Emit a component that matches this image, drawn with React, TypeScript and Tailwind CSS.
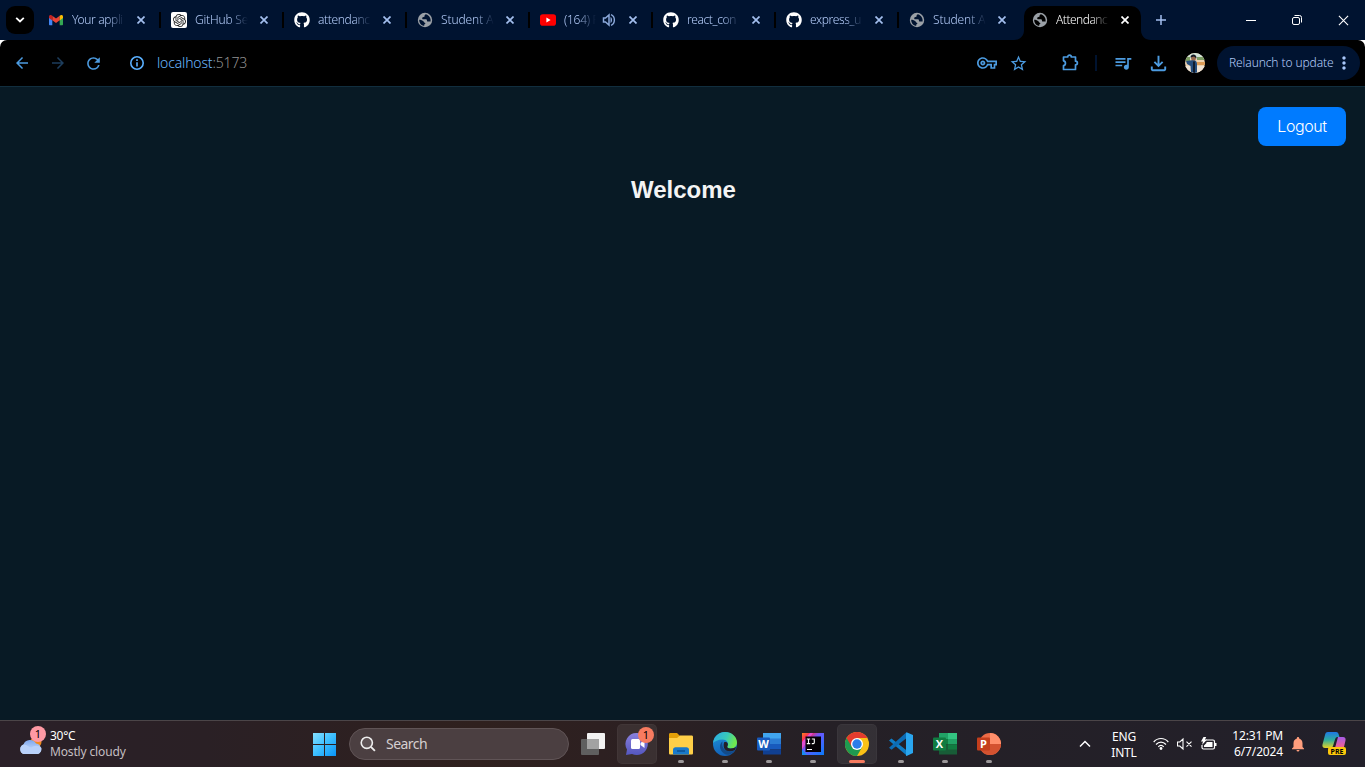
import React, { ReactNode } from "react";
import { FaGithub } from "react-icons/fa";
import { SiOpenai } from "react-icons/si";
import {
  MdOutlineVpnKey,
  MdStarBorder,
  MdQueueMusic,
  MdOutlineFileDownload,
  MdMoreVert,
  MdRefresh,
  MdArrowBack,
  MdArrowForward,
  MdNotifications,
} from "react-icons/md";

function Gmail() {
  return (
    <svg width="16" height="16" viewBox="0 0 16 16">
      <path d="M1 4v8.2c0 .6.4 1 1 1h2.300V7.200L1 4.700Z" fill="#4285f4" />
      <path d="M15 4v8.200c0 .6-.4 1-1 1h-2.300V7.200L15 4.700Z" fill="#34a853" />
      <path d="M4.300 3.800 8 6.600l3.700-2.800v4.400L8 11 4.300 8.200Z" fill="#ea4335" />
      <path d="M11.700 3.800c1.300-1.200 3.300-1 3.300.9v1.200l-3.300 2.500Z" fill="#fbbc04" />
      <path d="M4.300 3.800C3 2.600 1 2.800 1 4.700v1.200l3.300 2.500Z" fill="#c5221f" />
    </svg>
  );
}

function OpenAi() {
  return (
    <span className="flex h-4 w-4 items-center justify-center rounded-[2px] bg-white text-[#222]">
      <SiOpenai size={13} />
    </span>
  );
}

function Globe({ land = "#001330" }: { land?: string }) {
  return (
    <svg width="16" height="16" viewBox="0 0 16 16">
      <circle cx="8" cy="8" r="7.200" fill="#9aa0a6" />
      <path
        d="M9 2.300c-1 .3-1.600 1-1.400 1.800.2.800-.8 1-1.700 1.200-.9.200-.9 1.500-.2 1.900h3c1 0 1.300.7 1.300 1.500s.8.900 1.700.8c.8-.1 1.300.2 1.900.1.500-2.900-1.200-6.100-4.600-7.300Z"
        fill={land}
      />
      <path
        d="M2.200 7.700c1.200.1 2.600.3 3.900 1.200.9.6.7 1.600 1.700 1.800.8.200.7 1.100.1 1.400-.7.300-.7 1-.6 1.700-3-.3-5.200-2.900-5.100-6.100Z"
        fill={land}
      />
    </svg>
  );
}

function YouTube() {
  return (
    <svg width="16" height="16" viewBox="0 0 16 16">
      <rect x="0" y="2.300" width="16" height="11.400" rx="2.800" fill="#f00" />
      <path d="M6.400 5.600 10.600 8l-4.200 2.400Z" fill="#fff" />
    </svg>
  );
}

function Close({ className }: { className: string }) {
  return (
    <svg width="8" height="8" viewBox="0 0 8 8" className={className}>
      <path d="M.5.5l7 7M7.500.5l-7 7" stroke="currentColor" strokeWidth="1.700" fill="none" />
    </svg>
  );
}

function Speaker() {
  return (
    <svg width="14" height="14" viewBox="0 0 14 14" className="shrink-0 text-[#8ba9da]">
      <path d="M1.500 5h2L7 2v10L3.500 9h-2Z" fill="none" stroke="currentColor" strokeWidth="1.500" />
      <path d="M8.500 4v6c2-.5 2-5.500 0-6Z" fill="currentColor" />
      <path d="M9 1.700c4.500 1.800 4.500 8.800 0 10.600" fill="none" stroke="currentColor" strokeWidth="1.400" />
    </svg>
  );
}

type TabInfo = { icon: ReactNode; title: string; audio?: boolean; last?: boolean; tracking?: string };

const tabs: TabInfo[] = [
  { icon: <Gmail />, title: "Your appli" },
  { icon: <OpenAi />, title: "GitHub Se", tracking: "tracking-[-0.2px]" },
  { icon: <FaGithub size={16} className="text-white" />, title: "attendanc" },
  { icon: <Globe />, title: "Student A", tracking: "tracking-[-0.1px]" },
  { icon: <YouTube />, title: "(164) F", audio: true, tracking: "tracking-[-0.3px]" },
  { icon: <FaGithub size={16} className="text-white" />, title: "react_con" },
  { icon: <FaGithub size={16} className="text-white" />, title: "express_u" },
  { icon: <Globe />, title: "Student A", last: true, tracking: "tracking-[-0.1px]" },
];

function Tab({ tab }: { tab: TabInfo }) {
  return (
    <div className="flex h-10 w-[123px] shrink-0 items-center pl-[10px]">
      <span className="flex w-4 shrink-0">{tab.icon}</span>
      <span
        className={
          (tab.audio ? "w-[32px]" : "w-[53px]") +
          " ml-2 whitespace-nowrap text-[12px] font-light leading-4 text-[#b4cdfa] [mask-image:linear-gradient(to_left,transparent,black_18px)] " +
          (tab.tracking ?? "tracking-[-0.35px]")
        }
      >
        {tab.title}
      </span>
      {tab.audio && (
        <span className="ml-[6px] mr-[-1px] flex w-4">
          <Speaker />
        </span>
      )}
      <Close className="ml-3 shrink-0 text-[#a3bfee]" />
      {!tab.last && <span className="ml-auto h-4 w-[2px] bg-black" />}
    </div>
  );
}

function TabStrip() {
  return (
    <div className="flex h-10 shrink-0 items-center bg-[#001330] pl-[6px]">
      <div className="flex h-7 w-7 shrink-0 items-center justify-center rounded-[9px] bg-black">
        <svg width="10" height="6" viewBox="0 0 10 6">
          <path d="M1.200 .8 5 4.500 8.800 .8" fill="none" stroke="#fff" strokeWidth="1.800" />
        </svg>
      </div>
      <div className="ml-1 flex">
        {tabs.map((t, i) => (
          <Tab key={i} tab={t} />
        ))}
      </div>
      <div className="-ml-[8px] flex h-10 w-[137px] shrink-0 items-end">
        <svg width="10" height="10" viewBox="0 0 10 10" className="shrink-0">
          <path d="M10 0v10H0C6 10 10 6 10 0Z" fill="#000" />
        </svg>
        <div className="flex h-[34px] w-[117px] shrink-0 items-center rounded-t-[10px] bg-black pb-[6px] pl-2">
          <Globe land="#000" />
          <span className="ml-2 w-[53px] whitespace-nowrap text-[12px] font-light leading-4 tracking-[-0.5px] text-white [mask-image:linear-gradient(to_left,transparent,black_18px)]">
            Attendanc
          </span>
          <Close className="ml-3 text-white" />
        </div>
        <svg width="10" height="10" viewBox="0 0 10 10" className="shrink-0">
          <path d="M0 0v10h10C4 10 0 6 0 0Z" fill="#000" />
        </svg>
      </div>
      <svg width="12" height="12" viewBox="0 0 12 12" className="ml-[4px]">
        <path d="M6 1v10M1 6h10" stroke="#a3bfee" strokeWidth="1.500" />
      </svg>
      <div className="ml-auto mr-4 flex items-center text-white">
        <svg width="10" height="10" viewBox="0 0 10 10">
          <path d="M0 5.500h10" stroke="currentColor" />
        </svg>
        <svg width="10" height="10" viewBox="0 0 10 10" className="ml-9">
          <rect x=".5" y="2.500" width="7" height="7" rx="1.500" fill="none" stroke="currentColor" />
          <path d="M2.500 .5H7.500a2 2 0 0 1 2 2V7.500" fill="none" stroke="currentColor" />
        </svg>
        <svg width="11" height="11" viewBox="0 0 12 12" className="ml-9">
          <path d="M1 1l10 10M11 1 1 11" stroke="currentColor" strokeWidth="1.200" />
        </svg>
      </div>
    </div>
  );
}

function Avatar() {
  return (
    <svg width="20" height="20" viewBox="0 0 20 20">
      <defs>
        <clipPath id="avatar">
          <circle cx="10" cy="10" r="10" />
        </clipPath>
      </defs>
      <g clipPath="url(#avatar)">
        <rect width="20" height="20" fill="#ecd2b0" />
        <rect width="20" height="6" fill="#d4e4d8" />
        <path d="M0 4h5v4H0ZM12 4h8v3h-8Z" fill="#7c9c62" />
        <path d="M12 9h8v3h-8Z" fill="#dc9b55" />
        <path d="M0 13h20v7H0Z" fill="#f0e4d4" />
        <path d="M1 8c3 0 5-1 7-1 3 0 4 2 4 4v9H6l-.5-7L2 11Z" fill="#254d7c" />
        <circle cx="8.500" cy="5" r="2.500" fill="#9b6a4e" />
        <path d="M5.500 4.500c0-4 6.500-4 6 1L9 3.500Z" fill="#151b25" />
        <path d="M9 8.500V20" stroke="#111c2d" strokeWidth="2" />
      </g>
    </svg>
  );
}

function Puzzle() {
  return (
    <svg width="20" height="20" viewBox="0 0 20 20">
      <path
        d="M3.500 4h4.200c0-2.500 3.600-2.500 3.600 0H15.500v4.200c2.500 0 2.500 3.600 0 3.600V16.500h-12V12.700c2.600-.4 2.600-4.500 0-4.900Z"
        fill="none"
        stroke="currentColor"
        strokeWidth="1.700"
        strokeLinejoin="round"
      />
    </svg>
  );
}

function Info() {
  return (
    <svg width="16" height="16" viewBox="0 0 16 16">
      <circle cx="8" cy="8" r="6.200" fill="none" stroke="currentColor" strokeWidth="1.600" />
      <path d="M8 7.200v4.300M8 4.300v1.700" stroke="currentColor" strokeWidth="1.600" />
    </svg>
  );
}

function Toolbar() {
  return (
    <div className="h-[46px] shrink-0 bg-white">
      <div className="flex h-[46px] items-center rounded-t-[7px] bg-black pl-[13px] text-[#4c9be0]">
        <MdArrowBack size={18} />
        <MdArrowForward size={18} className="ml-[18px] text-[#1d3d5c]" />
        <MdRefresh size={19} className="ml-[17px]" />
        <span className="ml-[26px] flex text-[#5ab0ff]">
          <Info />
        </span>
        <span className="ml-[12px] text-[14px] font-light leading-5 tracking-[-0.16px] text-[#6bb8ff]">
          localhost<span className="text-[#929292]">:5173</span>
        </span>
        <div className="ml-auto flex items-center">
          <MdOutlineVpnKey size={20} />
          <MdStarBorder size={19} className="ml-[12px]" />
          <span className="ml-[32px] flex">
            <Puzzle />
          </span>
          <span className="ml-[15px] h-4 w-[2px] bg-[#001330]" />
          <MdQueueMusic size={20} className="ml-[16px]" />
          <MdOutlineFileDownload size={23} className="ml-[14px]" />
          <span className="ml-[15px] flex">
            <Avatar />
          </span>
          <div className="ml-3 mr-[5px] flex h-[34px] w-[143px] shrink-0 items-center rounded-full bg-[#001330] pl-3 text-[#a8c7fa]">
            <span className="w-[104px] whitespace-nowrap text-[12px] font-light leading-4 tracking-[-0.1px] text-[#b4cdfa]">
              Relaunch to update
            </span>
            <MdMoreVert size={20} className="ml-[1px] shrink-0" />
          </div>
        </div>
      </div>
    </div>
  );
}

function Page() {
  return (
    <main className="flex min-h-0 flex-1 flex-col border-t border-[#112e3e] bg-[#081a25] font-['Inter','Liberation_Sans',sans-serif]">
      <div className="flex justify-end pr-[19px] pt-5">
        <button className="h-[39px] w-[88px] rounded-lg bg-[#007bff] pb-[1px] text-[16px] font-light tracking-[-0.4px] text-white">
          Logout
        </button>
      </div>
      <h2 className="mt-[30px] pl-[2px] text-center font-['Liberation_Sans',sans-serif] text-[24px] font-bold leading-7 text-[#f4f4f4]">
        Welcome
      </h2>
    </main>
  );
}

function Weather() {
  return (
    <div className="relative h-8 w-7">
      <svg width="28" height="32" viewBox="0 0 28 32">
        <defs>
          <linearGradient id="cloud" x1="0" y1="0" x2="0" y2="1">
            <stop offset="0" stopColor="#7fa8ee" />
            <stop offset="1" stopColor="#d8e8ff" />
          </linearGradient>
        </defs>
        <circle cx="17" cy="16" r="5.500" fill="#f08a1e" />
        <path d="M5 28a5 5 0 0 1-.5-9.500 7 7 0 0 1 12.500-1 5.600 5.600 0 0 1 2 10.500Z" fill="url(#cloud)" />
        <path d="M5 28a5 5 0 0 1-.5-9.500c4 0 5 3 8 3 2-2 7-3 10 .5a5.600 5.600 0 0 1-4 6Z" fill="#b9d1fa" />
      </svg>
      <span className="absolute left-[11px] top-0 flex h-4 w-4 items-center justify-center rounded-full bg-[#ff99a4] text-[11px] text-black">
        1
      </span>
    </div>
  );
}

function Start() {
  return (
    <svg width="24" height="24" viewBox="0 0 24 24">
      <defs>
        <linearGradient id="start" x1="0" y1="0" x2="24" y2="24" gradientUnits="userSpaceOnUse">
          <stop offset="0" stopColor="#8be3ff" />
          <stop offset=".5" stopColor="#3fc0ff" />
          <stop offset="1" stopColor="#0894f8" />
        </linearGradient>
      </defs>
      <path d="M1 1h11v11H1ZM13 1h11v11H13ZM1 13h11v11H1ZM13 13h11v11H13Z" fill="url(#start)" />
    </svg>
  );
}

function TaskView() {
  return (
    <svg width="24" height="24" viewBox="0 0 24 24">
      <rect x="6" y="1" width="18" height="16" rx="1" fill="#f2f2f2" />
      <rect x="0" y="7" width="18" height="16" rx="1" fill="#5f5f5f" />
      <path d="M6 7h12v10H6Z" fill="#a2a2a2" />
    </svg>
  );
}

function Teams() {
  return (
    <div className="relative h-6 w-6">
      <svg width="24" height="24" viewBox="0 0 24 24">
        <defs>
          <linearGradient id="teams" x1="0" y1="0" x2="0" y2="1">
            <stop offset="0" stopColor="#8a80dc" />
            <stop offset="1" stopColor="#5457c0" />
          </linearGradient>
        </defs>
        <path d="M12 1a11 11 0 1 1-5 20.900L1 23l1-5.500A11 11 0 0 1 12 1Z" fill="url(#teams)" />
        <rect x="6" y="7" width="9" height="10" rx="1.500" fill="#fff" />
        <path d="m15.500 11 4-3v8l-4-3Z" fill="#fff" />
      </svg>
      <span className="absolute -top-[5px] left-[13px] flex h-4 w-4 items-center justify-center rounded-full bg-[#f77b60] text-[11px] text-black">
        1
      </span>
    </div>
  );
}

function Folder() {
  return (
    <svg width="24" height="24" viewBox="0 0 24 24">
      <path d="M0 2.500C0 1.500.5 1 1.500 1H8l3 3v4H0Z" fill="#e3a008" />
      <path d="M0 6h8l3-2.500h11.500c1 0 1.500.5 1.500 1.500v16c0 1-.5 1.500-1.500 1.500h-21C.5 22.500 0 22 0 21Z" fill="#ffcf48" />
      <path d="M4 22.500V18c0-1.700 1-2.700 2.500-2.700h11c1.500 0 2.500 1 2.500 2.700v4.500Z" fill="#1979ca" />
      <path d="M8 19h8" stroke="#0b4f91" strokeWidth="1.500" />
    </svg>
  );
}

function Edge() {
  return (
    <svg width="24" height="24" viewBox="0 0 24 24">
      <defs>
        <linearGradient id="edgeTop" x1="0" y1="0" x2="1" y2=".3">
          <stop offset="0" stopColor="#2aa9e8" />
          <stop offset=".6" stopColor="#38c9b9" />
          <stop offset="1" stopColor="#6ee850" />
        </linearGradient>
        <linearGradient id="edgeLow" x1="0" y1="0" x2=".3" y2="1">
          <stop offset="0" stopColor="#2097dc" />
          <stop offset="1" stopColor="#1160b8" />
        </linearGradient>
      </defs>
      <circle cx="12" cy="12" r="12" fill="url(#edgeLow)" />
      <path d="M0 11C1 4 6 0 12 0c7 0 12 5 12 10.500 0 4-3 6-6 6-3 0-4.500-1.200-3.500-2.500 2-3-1-6.500-5-6.500-4.500 0-8 2-9.500 3.500Z" fill="url(#edgeTop)" />
      <path d="M9.500 9.500C6 12 6 18 11 21.500c4 2.500 8 1 11-3-2 1-5 1.300-7.500.5-4-1.200-6-5-5-9.500Z" fill="#134a89" />
      <path d="M11 10.500c2-1.500 5 .5 3.500 3.500-1 1.500.5 2.500 3 2.500 2.500 0 4.500-.7 5.500-1.700l-.8 3.200c-7 3-13.200.7-11.200-7.500Z" fill="#241f26" />
    </svg>
  );
}

function Office({ kind }: { kind: "W" | "X" | "P" }) {
  const tile = kind === "W" ? "#185abd" : kind === "X" ? "#107c41" : "#c43e1c";
  return (
    <svg width="24" height="24" viewBox="0 0 24 24">
      {kind === "W" && (
        <g>
          <rect x="6" y="1" width="18" height="6" fill="#41a5ee" />
          <rect x="6" y="6.500" width="18" height="5.500" fill="#2b7cd3" />
          <rect x="6" y="12" width="18" height="5.500" fill="#185abd" />
          <rect x="6" y="17.500" width="18" height="5" fill="#103f91" />
        </g>
      )}
      {kind === "X" && (
        <g>
          <rect x="6" y="1" width="9" height="6" fill="#21a366" />
          <rect x="15" y="1" width="9" height="6" fill="#33c481" />
          <rect x="6" y="7" width="9" height="5.500" fill="#107c41" />
          <rect x="15" y="7" width="9" height="5.500" fill="#21a366" />
          <rect x="6" y="12.500" width="18" height="10" fill="#185c37" />
          <rect x="15" y="12.500" width="9" height="5" fill="#107c41" />
        </g>
      )}
      {kind === "P" && (
        <g>
          <circle cx="13" cy="12" r="11" fill="#ed6c47" />
          <path d="M13 1a11 11 0 0 1 11 11H13Z" fill="#ff8f6b" />
          <path d="M2 12h22a11 11 0 0 1-22 0Z" fill="#d35230" />
        </g>
      )}
      <rect x="0" y="5.500" width="13" height="13" rx="1" fill={tile} />
      <text x="6.500" y="16" textAnchor="middle" fontSize="11" fontWeight="700" fontFamily="Open Sans" fill="#fff">
        {kind}
      </text>
    </svg>
  );
}

function Intellij() {
  return (
    <svg width="24" height="24" viewBox="0 0 24 24">
      <defs>
        <linearGradient id="ij" x1="0" y1="0" x2="1" y2="1">
          <stop offset="0" stopColor="#fc801d" />
          <stop offset=".2" stopColor="#fe2857" />
          <stop offset=".42" stopColor="#6b57ff" />
          <stop offset="1" stopColor="#087cfa" />
        </linearGradient>
      </defs>
      <rect x="1" y="1" width="22" height="22" fill="url(#ij)" />
      <path d="M9 1h3L1 17V10Z" fill="#e04bd0" />
      <path d="M1 17v6h5Z" fill="#1a8cf0" />
      <rect x="4.500" y="4.500" width="15.500" height="15.500" fill="#050005" />
      <path d="M5.800 7h3.400M7.500 7v4.600M5.800 11.600h3.400M10.800 7h2.500v3.400c0 1-.8 1.400-2.500 1.200M6 17.500h5" fill="none" stroke="#fff" strokeWidth="1.100" />
    </svg>
  );
}

function Chrome() {
  return (
    <svg width="24" height="24" viewBox="0 0 24 24">
      <circle cx="12" cy="12" r="12" fill="#fbc116" />
      <path d="M12 12 1.600 6A12 12 0 0 0 12 24l5.200-9Z" fill="#1e9b50" />
      <path d="M1.600 6a12 12 0 0 1 20.800 0H12l-5.200 9Z" fill="#e33b2e" />
      <circle cx="12" cy="12" r="6" fill="#fff" />
      <circle cx="12" cy="12" r="4.700" fill="#2b7de9" />
    </svg>
  );
}

function VsCode() {
  return (
    <svg width="24" height="24" viewBox="0 0 24 24">
      <path d="m0 8.500 2.500-2 16.500 13-1 4.200Z" fill="#0f7dc6" />
      <path d="M0 15.700 17.500 .2 19 5 2.500 17.800Z" fill="#0c6cb5" />
      <path d="M17.500 .2 24 3v18l-6.500 3c-.6-.2-.5-1-.5-1.500V1.500Z" fill="#2aa6ef" />
    </svg>
  );
}

function Cell({ children, active, bar }: { children: ReactNode; active?: boolean; bar?: "dot" | "line" }) {
  return (
    <div
      className={
        "relative flex h-10 w-10 shrink-0 items-center justify-center rounded-[5px] " +
        (active ? "bg-white/[0.07] shadow-[inset_0_0_0_1px_rgba(255,255,255,0.03)]" : "")
      }
    >
      {children}
      {bar === "dot" && <span className="absolute bottom-[1px] left-[17px] h-[3px] w-[6px] rounded-full bg-[#9b9799]" />}
      {bar === "line" && <span className="absolute bottom-[1px] left-3 h-[3px] w-4 rounded-full bg-[#f77b60]" />}
    </div>
  );
}

function Copilot() {
  return (
    <div className="relative h-6 w-[26px]">
      <svg width="24" height="22" viewBox="0 0 24 22">
        <defs>
          <linearGradient id="cpA" x1="0" y1="0" x2="0" y2="1">
            <stop offset="0" stopColor="#1e78e6" />
            <stop offset=".5" stopColor="#2fae9c" />
            <stop offset="1" stopColor="#e6d224" />
          </linearGradient>
          <linearGradient id="cpB" x1="0" y1="0" x2="0" y2="1">
            <stop offset="0" stopColor="#a45be8" />
            <stop offset=".6" stopColor="#e8609c" />
            <stop offset="1" stopColor="#f79a4c" />
          </linearGradient>
        </defs>
        <path d="M6 0h8c2 0 2.500 1.500 3 3.500l.5 1.500h-2c-1.500 0-2 1-2.500 2.500L11 14c-.5 1-1 2-2.500 2H3c-2 0-3-1.500-2.500-3.500L3 3c.5-2 1-3 3-3Z" fill="url(#cpA)" />
        <path d="M16 5h5c2 0 3 1.500 2.500 3.500L21.500 17c-.5 2-1.500 3-3 3H11l2-4Z" fill="url(#cpB)" />
      </svg>
      <span className="absolute left-[6px] top-[15px] flex h-[8px] w-[18px] items-center justify-center rounded-[2px] bg-[#fcc70b] text-[7px] font-bold leading-none text-black">
        PRE
      </span>
    </div>
  );
}

function Taskbar() {
  return (
    <footer className="flex h-[47px] shrink-0 items-center border-t border-[#4b4548] bg-[linear-gradient(90deg,#2a2028_0%,#2a2025_15%,#2f201e_35%,#2d2021_44%,#252026_60%,#22202a_100%)] text-[12px] text-white">
      <div className="flex w-[304px] shrink-0 items-center pl-[19px]">
        <div className="-mt-1">
          <Weather />
        </div>
        <div className="ml-[3px] leading-4">
          <div className="tracking-[-0.3px]">30°C</div>
          <div className="tracking-[-0.15px] text-[#c4bfc1]">Mostly cloudy</div>
        </div>
      </div>
      <Cell>
        <Start />
      </Cell>
      <div className="ml-[5px] mr-1 flex h-8 w-[220px] shrink-0 items-center rounded-full border border-[#605456] bg-[#4b3f41] pl-[10px]">
        <svg width="16" height="16" viewBox="0 0 16 16">
          <circle cx="6.800" cy="6.800" r="5.600" fill="#5d5254" stroke="#eee" strokeWidth="1.600" />
          <path d="m10.900 10.900 4 4" stroke="#eee" strokeWidth="1.900" />
        </svg>
        <span className="ml-[10px] text-[14px] leading-5 tracking-[-0.55px] text-[#d5cfd0]">Search</span>
      </div>
      <div className="flex gap-1">
        <Cell><TaskView /></Cell>
        <Cell active><Teams /></Cell>
        <Cell bar="dot"><Folder /></Cell>
        <Cell bar="dot"><Edge /></Cell>
        <Cell bar="dot"><Office kind="W" /></Cell>
        <Cell bar="dot"><Intellij /></Cell>
        <Cell active bar="line"><Chrome /></Cell>
        <Cell bar="dot"><VsCode /></Cell>
        <Cell bar="dot"><Office kind="X" /></Cell>
        <Cell bar="dot"><Office kind="P" /></Cell>
      </div>
      <div className="ml-auto flex items-center pr-[17px]">
        <svg width="12" height="8" viewBox="0 0 12 8">
          <path d="M1 6.500 6 1.500l5 5" fill="none" stroke="#fff" strokeWidth="1.500" />
        </svg>
        <div className="ml-5 w-[26px] pt-[2px] text-center leading-4 tracking-[-0.2px]">
          <div>ENG</div>
          <div>INTL</div>
        </div>
        <svg width="16" height="14" viewBox="0 0 16 14" className="ml-4">
          <path d="M.7 5c4-4.700 10.600-4.700 14.600 0M3 7.500c3-3.300 7-3.300 10 0M5.300 9.800c1.700-1.800 3.700-1.800 5.400 0" fill="none" stroke="#fff" strokeWidth="1.200" />
          <circle cx="8" cy="11.500" r="1.400" fill="#fff" />
        </svg>
        <svg width="16" height="14" viewBox="0 0 16 14" className="ml-[8px]">
          <path d="M.5 5h2.300L6 2v10L2.800 9H.5ZM9.500 4.700l5 5M14.500 4.700l-5 5" fill="none" stroke="#fff" strokeWidth="1.100" />
        </svg>
        <svg width="17" height="14" viewBox="0 0 17 14" className="ml-[7px]">
          <path d="M6 3h7a1.500 1.500 0 0 1 1.500 1.500v6A1.500 1.500 0 0 1 13 12H3.500A1.500 1.500 0 0 1 2 10.500V8" fill="none" stroke="#fff" strokeWidth="1.200" />
          <path d="M6.500 5H12.500v5H4V8.500L6.500 6ZM15 6h1.500v3H15ZM3.500 0h2.700L5 2.500h2L2 8l1-3.500H1Z" fill="#fff" />
        </svg>
        <div className="ml-[15px] w-[51px] whitespace-nowrap text-right leading-4 tracking-[-0.15px]">
          <div>12:31 PM</div>
          <div>6/7/2024</div>
        </div>
        <MdNotifications size={18} className="ml-[6px] text-[#ff9e7d]" />
        <div className="ml-[15px]">
          <Copilot />
        </div>
      </div>
    </footer>
  );
}

export default function App() {
  return (
    <div className="flex h-[767px] w-[1365px] flex-col overflow-hidden font-['Noto_Sans','Open_Sans',sans-serif]">
      <TabStrip />
      <Toolbar />
      <Page />
      <Taskbar />
    </div>
  );
}
